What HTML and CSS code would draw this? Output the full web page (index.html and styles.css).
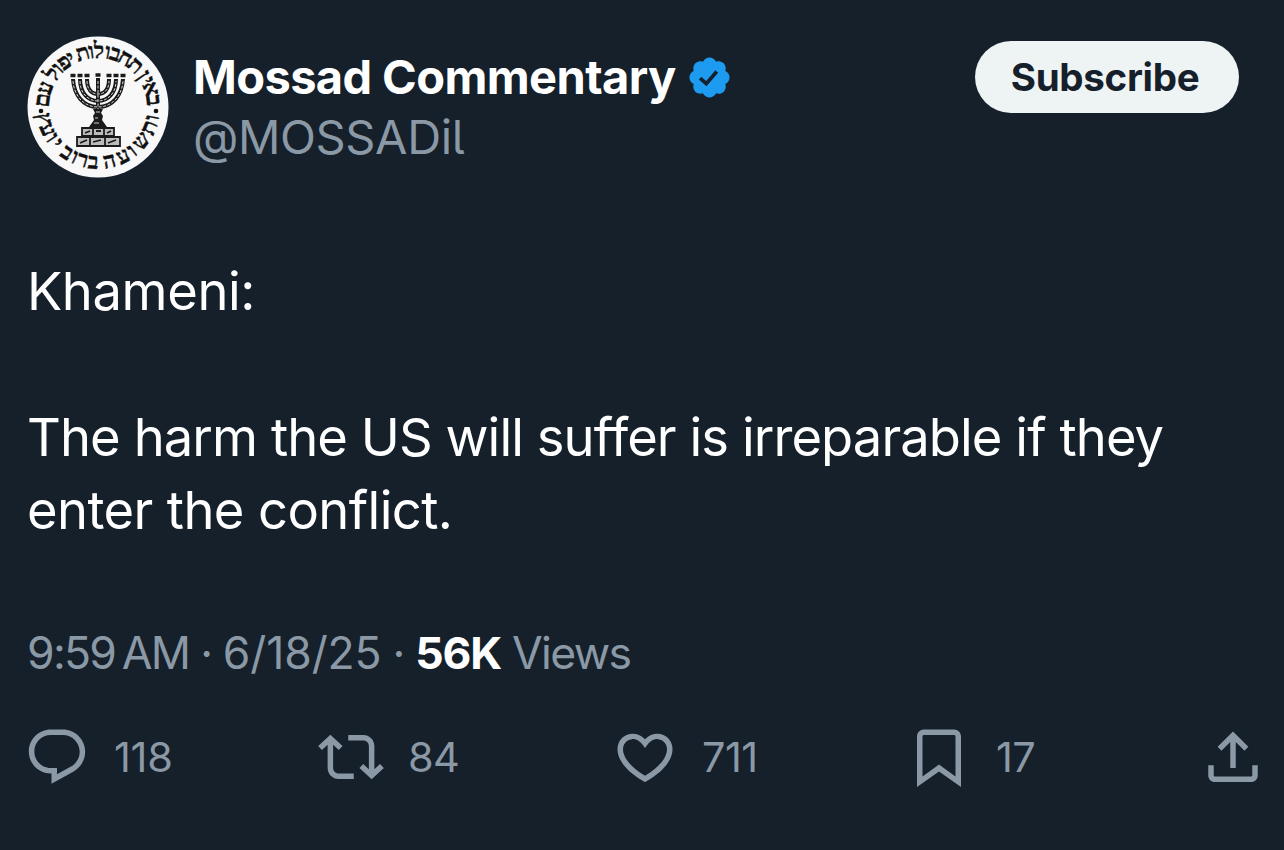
FILE: index.html
```
<!DOCTYPE html>
<html lang="en">
<head>
    <meta charset="UTF-8">
    <meta name="viewport" content="width=device-width,initial-scale=1.0">
    <title>Mossad Commentary</title>
    <link rel="stylesheet" href="styles.css">
</head>
<body>
    <article class="post">
        <header class="post-header">
            <svg class="avatar" viewBox="-71 -71 142 142">
                <circle r="70.5" fill="#f8f8f8"/>
                <g class="ring">
                    <text transform="rotate(83)" y="-49">ב</text>
                    <text transform="rotate(71)" y="-49">א</text>
                    <text transform="rotate(62)" y="-49">י</text>
                    <text transform="rotate(55)" y="-49">ן</text>
                    <text transform="rotate(42)" y="-49">ת</text>
                    <text transform="rotate(29)" y="-49">ח</text>
                    <text transform="rotate(18)" y="-49">ב</text>
                    <text transform="rotate(10)" y="-49">ו</text>
                    <text transform="rotate(1)" y="-49">ל</text>
                    <text transform="rotate(-7)" y="-49">ו</text>
                    <text transform="rotate(-16)" y="-49">ת</text>
                    <text transform="rotate(-29)" y="-49">י</text>
                    <text transform="rotate(-37)" y="-49">פ</text>
                    <text transform="rotate(-46)" y="-49">ו</text>
                    <text transform="rotate(-54)" y="-49">ל</text>
                    <text transform="rotate(-70)" y="-49">ע</text>
                    <text transform="rotate(-83)" y="-49">ם</text>
                    <text transform="rotate(-79)" y="62">ו</text>
                    <text transform="rotate(-68)" y="62">ת</text>
                    <text transform="rotate(-52)" y="62">ש</text>
                    <text transform="rotate(-38)" y="62">ו</text>
                    <text transform="rotate(-27)" y="62">ע</text>
                    <text transform="rotate(-12)" y="62">ה</text>
                    <text transform="rotate(5)" y="62">ב</text>
                    <text transform="rotate(16)" y="62">ר</text>
                    <text transform="rotate(25)" y="62">ו</text>
                    <text transform="rotate(34)" y="62">ב</text>
                    <text transform="rotate(48)" y="62">י</text>
                    <text transform="rotate(56)" y="62">ו</text>
                    <text transform="rotate(66)" y="62">ע</text>
                    <text transform="rotate(78)" y="62">ץ</text>
                </g>
                <circle cx="-57" cy="4" r="2.3" fill="#111"/>
                <circle cx="58" cy="4" r="2.3" fill="#111"/>
                <!-- menorah -->
                <g fill="none" stroke="#1a1a1a" stroke-width="4">
                    <path d="M-25-28C-24-12-15 0 0 0S24-12 25-28"/>
                    <path d="M-18-28C-18-14-10-6 0-6S18-14 18-28"/>
                    <path d="M-11-28C-11-17-6-13 0-13S11-17 11-28"/>
                    <path d="M0-29V8"/>
                </g>
                <g fill="none" stroke="#d5d5d5" stroke-width="1" stroke-dasharray="3 1.5">
                    <path d="M-25-26C-24-12-15 0 0 0S24-12 25-26"/>
                    <path d="M-18-26C-18-14-10-6 0-6S18-14 18-26"/>
                    <path d="M-11-26C-11-17-6-13 0-13S11-17 11-26"/>
                    <path d="M0-26V8"/>
                </g>
                <path d="M-27.5-31.5h5M-20.5-31.5h5M-13.5-31.5h5M-2.5-32h5M8.5-31.5h5M15.5-31.5h5M22.5-31.5h5" stroke="#1a1a1a" stroke-width="3.5"/>
                <path d="M-5 2H5L3 6 5 9 4 13 9 20H-9L-4 13-5 9-3 6Z" fill="#1a1a1a"/>
                <path d="M-2 5H2M-3 11H0M-4 16H1" stroke="#ccc"/>
                <g fill="#bbb" stroke="#1a1a1a" stroke-width="1.8">
                    <path d="M-16 21h11v8h-11zM-5 21H6v8H-5zM6 21h10v8H6zM-21 30h13v9h-13zM-8 30H7v9H-8zM7 30h15v9H7z"/>
                    <path d="M-13 26l5-2M-2 24h5M9 26l4-2M-18 36l7-3M-5 35l8-2M10 36l8-3"/>
                </g>
            </svg>
            <div class="author">
                <div class="name-row">
                    <span class="name">Mossad Commentary</span>
                    <svg class="badge" viewBox="0 0 22 22">
                        <path fill="#1d9bf0" d="M20.396 11c-.018-.646-.215-1.275-.57-1.816-.354-.54-.852-.972-1.438-1.246.223-.607.27-1.264.14-1.897-.131-.634-.437-1.218-.882-1.687-.47-.445-1.053-.75-1.687-.882-.633-.13-1.29-.083-1.897.14-.273-.587-.704-1.086-1.245-1.44S11.647 1.62 11 1.604c-.646.017-1.273.213-1.813.568s-.969.854-1.24 1.44c-.608-.223-1.267-.272-1.902-.14-.635.13-1.22.436-1.69.882-.445.47-.749 1.055-.878 1.688-.13.633-.08 1.29.144 1.896-.587.274-1.087.705-1.443 1.245-.356.54-.555 1.17-.574 1.817.02.647.218 1.276.574 1.817.356.54.856.972 1.443 1.245-.224.606-.274 1.263-.144 1.896.13.634.433 1.218.877 1.688.47.443 1.054.747 1.687.878.633.132 1.29.084 1.897-.136.274.586.705 1.084 1.246 1.439.54.354 1.17.551 1.816.569.647-.016 1.276-.213 1.817-.567s.972-.854 1.245-1.44c.604.239 1.266.296 1.903.164.636-.132 1.22-.447 1.68-.907.46-.46.776-1.044.908-1.681s.075-1.299-.165-1.903c.586-.274 1.084-.705 1.439-1.246.354-.54.551-1.17.569-1.816z"/>
                        <path fill="none" stroke="#15202b" stroke-width="1.7" d="M6.6 11.3l2.9 2.6 4.9-5.7"/>
                    </svg>
                </div>
                <div class="handle">@MOSSADil</div>
            </div>
            <button class="subscribe">Subscribe</button>
        </header>

        <div class="post-text">
            <p class="speaker">Khameni:</p>
            <p>The harm the US will suffer is irreparable if they <span class="last-line">enter the conflict.</span></p>
        </div>

        <div class="meta">
            <span class="time">9:59&#8201;AM</span>
            <span class="dot">·</span>
            <span class="date">6/18/25</span>
            <span class="dot">·</span>
            <span class="views-count">56K</span>
            <span class="views">Views</span>
        </div>

        <div class="actions">
            <div class="action">
                <svg class="icon" viewBox="0 0 24 24"><path d="M1.751 10c0-4.42 3.584-8 8.005-8h4.366c4.49 0 8.129 3.64 8.129 8.13 0 2.96-1.607 5.68-4.196 7.11l-8.054 4.46v-3.69h-.067c-4.49.1-8.183-3.51-8.183-8.01zm8.005-6c-3.317 0-6.005 2.69-6.005 6 0 3.37 2.77 6.08 6.138 6.01l.351-.01h1.761v2.3l5.087-2.81c1.951-1.08 3.163-3.13 3.163-5.36 0-3.39-2.744-6.13-6.129-6.13H9.756z"/></svg>
                <span class="replies">118</span>
            </div>
            <div class="action">
                <svg class="icon" viewBox="0 0 24 24"><path d="M4.5 3.88l4.432 4.14-1.364 1.46L5.5 7.55V16c0 1.1.896 2 2 2H13v2H7.5c-2.209 0-4-1.79-4-4V7.55L1.432 9.48.068 8.02 4.5 3.88zM16.5 6H11V4h5.5c2.209 0 4 1.79 4 4v8.45l2.068-1.93 1.364 1.46-4.432 4.14-4.432-4.14 1.364-1.46 2.068 1.93V8c0-1.1-.896-2-2-2z"/></svg>
                <span>84</span>
            </div>
            <div class="action">
                <svg class="icon" viewBox="0 0 24 24"><path d="M16.697 5.5c-1.222-.06-2.679.51-3.89 2.16l-.805 1.09-.806-1.09C9.984 6.01 8.526 5.44 7.304 5.5c-1.243.07-2.349.78-2.91 1.91-.552 1.12-.633 2.78.479 4.82 1.074 1.97 3.257 4.27 7.129 6.61 3.87-2.34 6.052-4.64 7.126-6.61 1.111-2.04 1.03-3.7.477-4.82-.561-1.13-1.666-1.84-2.908-1.91zm4.187 7.69c-1.351 2.48-4.001 5.12-8.379 7.67l-.503.3-.504-.3c-4.379-2.55-7.029-5.19-8.382-7.67-1.36-2.5-1.41-4.86-.514-6.67.887-1.79 2.647-2.91 4.601-3.01 1.651-.09 3.368.56 4.798 2.01 1.429-1.45 3.146-2.1 4.796-2.01 1.954.1 3.714 1.22 4.601 3.01.896 1.81.846 4.17-.514 6.67z"/></svg>
                <span>711</span>
            </div>
            <div class="action">
                <svg class="icon" viewBox="0 0 24 24"><path d="M4 4.5C4 3.12 5.119 2 6.5 2h11C18.881 2 20 3.12 20 4.5v18.44l-8-5.71-8 5.71V4.5zM6.5 4c-.276 0-.5.22-.5.5v14.56l6-4.29 6 4.29V4.5c0-.28-.224-.5-.5-.5h-11z"/></svg>
                <span>17</span>
            </div>
            <div class="action">
                <svg class="icon" viewBox="0 0 24 24"><path d="M12 2.7l5.6 5.6-1.41 1.42L13 6.52V16h-2V6.52l-3.2 3.2-1.4-1.42L12 2.7zM21 15v3.7c0 1.35-1.1 2.4-2.4 2.4H5.4C4.1 21.1 3 20.05 3 18.7V15h2v3.6c0 .28.22.5.5.5h13c.28 0 .5-.22.5-.5V15h2z"/></svg>
            </div>
        </div>
    </article>
</body>
</html>
```
FILE: styles.css
```
body {
    margin: 0;
    background: #15202b;
    font-family: Inter, "Liberation Sans", sans-serif;
    color: #fff;
}

.post {
    box-sizing: border-box;
    width: 1284px;
    height: 850px;
    padding: 36px 24px 0 27px;
    overflow: hidden;
}

.post-header {
    display: flex;
    align-items: flex-start;
}

.avatar {
    width: 142px;
    height: 142px;
    flex-shrink: 0;
}

.ring {
    font-family: "Liberation Serif", serif;
    font-size: 22.5px;
    font-weight: bold;
    text-anchor: middle;
    fill: #111;
    stroke: #111;
    stroke-width: 0.3px;
}

.author {
    margin: 11px 0 0 24px;
    line-height: 60px;
    font-size: 47px;
}

.name-row {
    display: flex;
    align-items: center;
    height: 60px;
}

.name {
    font-weight: 700;
    letter-spacing: -0.6px;
}

.badge {
    width: 47px;
    height: 47px;
    margin-left: 10px;
}

.handle {
    color: #8b98a5;
    letter-spacing: -0.4px;
    font-feature-settings: "cv05";
}

.subscribe {
    width: 264px;
    height: 72px;
    margin: 5px 21px 0 auto;
    padding: 0 4px 0 0;
    border: none;
    border-radius: 36px;
    background: #eef3f4;
    color: #15202b;
    font-family: inherit;
    font-size: 38.5px;
    font-weight: 650;
    letter-spacing: -0.3px;
}

.post-text {
    margin-top: 77px;
    font-size: 52.5px;
    line-height: 73px;
    letter-spacing: -0.92px;
}

.post-text p {
    margin: 0 0 73px;
}

.post-text p:last-child {
    margin-bottom: 0;
}

.speaker {
    letter-spacing: -0.4px;
}

.last-line {
    letter-spacing: -0.6px;
}

.meta {
    display: flex;
    gap: 11px;
    margin-top: 79px;
    color: #8b98a5;
    font-size: 44.5px;
    line-height: 54px;
    letter-spacing: -1.2px;
}

.time {
    letter-spacing: -1.7px;
}

.date {
    letter-spacing: -0.1px;
}

.views-count {
    color: #fff;
    font-weight: 700;
}

.views {
    letter-spacing: -1.6px;
}

.actions {
    display: grid;
    grid-template-columns: repeat(4, 294px) 66px;
    margin: 44px 0 0 -3px;
}

.action {
    display: flex;
    align-items: center;
    gap: 24px;
    color: #8b98a5;
    font-size: 41.5px;
    letter-spacing: -0.6px;
}

.replies {
    letter-spacing: -0.3px;
}

.icon {
    width: 66px;
    height: 66px;
    flex-shrink: 0;
    fill: #8b98a5;
}
```
